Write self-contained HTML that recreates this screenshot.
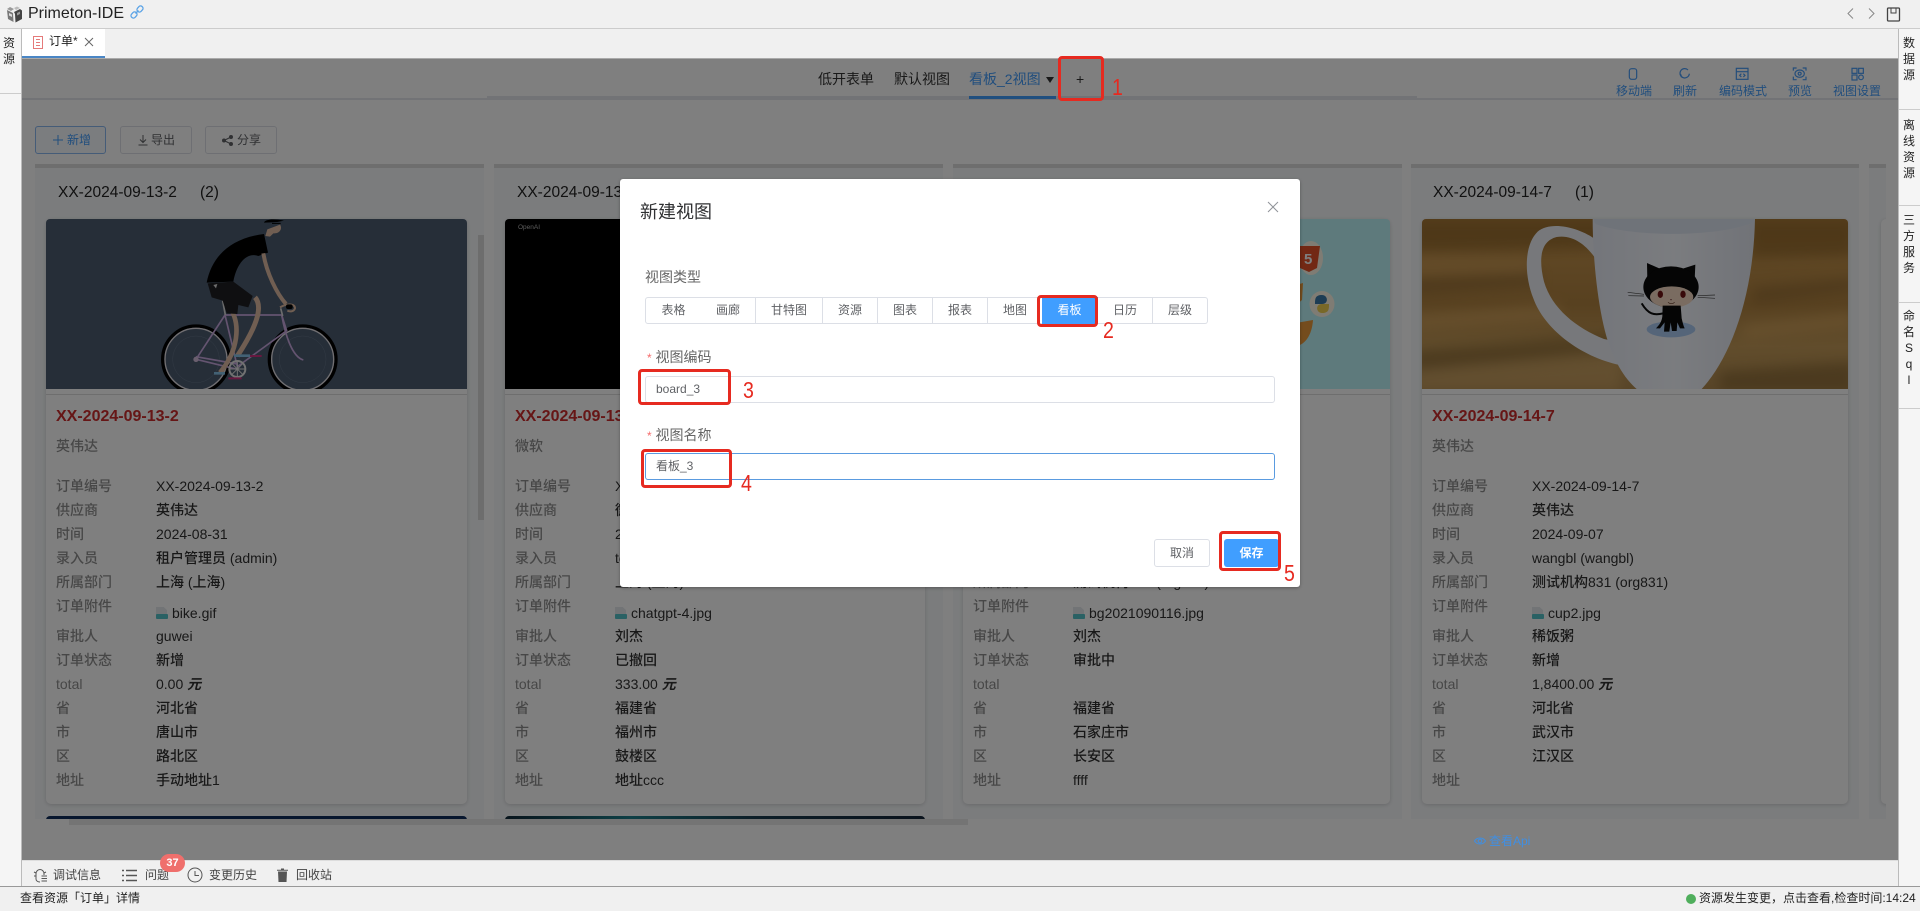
<!DOCTYPE html>
<html lang="zh"><head><meta charset="utf-8"><title>Primeton-IDE</title>
<style>
html,body{margin:0;padding:0;width:1920px;height:911px;overflow:hidden;background:#f0f0f0;font-family:"Liberation Sans","Noto Sans CJK SC",sans-serif;color:#303133}
.a{position:absolute;white-space:nowrap}
svg{position:absolute;overflow:visible}
.side{position:absolute;background:#f5f5f5}
.v{position:absolute;width:12px;font-size:12px;line-height:16px;word-break:break-all;white-space:normal;color:#222;text-align:center}
.t{top:70px;line-height:18px;font-size:14px;color:#333}
.b{top:126px;height:26px;border:1px solid #dcdfe6;border-radius:3px;background:#fff;font-size:12px;line-height:26px;color:#606266;box-sizing:content-box}
.tool{top:82px;line-height:18px;font-size:12px;color:#429cfb}
.col{position:absolute;top:164px;height:655px;width:449px;background:#f7f9fb;border-top:4px solid #dcdcdc;box-sizing:border-box}
.h{position:absolute;font-size:15.5px;line-height:20px;color:#222}
.card{position:absolute;top:219px;height:585px;background:#fff;border-radius:5px;box-shadow:0 1px 4px rgba(0,0,0,.16)}
.card .ln{position:absolute;left:0;right:0;top:175px;height:1px;background:#ddd}
.card .ti{position:absolute;left:10px;top:188px;font-size:16px;line-height:20px;font-weight:bold;color:#cc2c2c}
.card .su{position:absolute;left:10px;top:217px;font-size:14px;line-height:20px;color:#8e8e8e;font-weight:500}
.rows{position:absolute;left:10px;top:255px;right:0}
.rows p{margin:0;height:24px;line-height:24px;font-size:14px;position:relative;color:#8e8e8e;white-space:nowrap;font-weight:500}
.rows p.f{height:30px}
.rows i{position:absolute;left:100px;top:0;font-style:normal;color:#303030}
.rows p.f i{top:7px}
.rows i u{text-decoration:none;padding-left:16px;position:relative}
.rows i u:before{content:"";position:absolute;left:0;top:2px;width:11px;height:9px;background:#e4e8ec;clip-path:polygon(0 0,70% 0,100% 35%,100% 100%,0 100%)}
.rows i u:after{content:"";position:absolute;left:0;top:9px;width:12px;height:5px;background:#55c2c9;border-radius:1px}
.m{position:absolute;left:620px;top:179px;width:680px;height:408px;background:#fff;border-radius:3px;box-shadow:0 1px 3px rgba(0,0,0,.3);z-index:5}
.seg{position:absolute;top:297px;height:25px;border:1px solid #dcdfe6;border-left:0;font-size:12px;line-height:25px;text-align:center;color:#606266;background:#fff;z-index:6;box-sizing:content-box}
.lab{z-index:6;font-size:14px;line-height:20px;color:#666}
.inp{position:absolute;left:645px;width:628px;height:25px;border:1px solid #dcdfe6;border-radius:3px;background:#fff;z-index:6;font-size:12px;line-height:25px;color:#606266;text-indent:10px}
.red{position:absolute;border:3px solid #e62a20;border-radius:4px;box-sizing:border-box;z-index:8}
.n{position:absolute;z-index:8;color:#e62a20;font-size:23px;line-height:24px;transform:scaleX(.85);transform-origin:50% 50%}
.bt{position:absolute;left:0;font-size:12px;line-height:16px;color:#444;top:867px}
</style></head><body>

<!-- top bar -->
<div class="a" style="left:0;top:0;width:1920px;height:28px;background:#f0f0f0;border-bottom:1px solid #ccc"></div>
<svg style="left:6px;top:6px" width="17" height="17" viewBox="0 0 17 17"><path d="M8 6 L14 3 L16 4.5 L16 13 L9.5 16.5 L9 8 Z" fill="#444"/><path d="M1 4 L7 7 L7.5 16 L2 13 Z" fill="#777"/><path d="M1 3 L4 1 L8 3 L5 5 Z" fill="#999"/><path d="M8 2 L11 .5 L14 2 L10 4 Z" fill="#bbb"/><path d="M3 7 L6 8.5 L6 11 L3 9.5Z" fill="#ddd"/><path d="M11 7 L14 5.5 L14 8 L11 9.5Z" fill="#999"/></svg>
<div class="a" style="left:28px;top:4px;font-size:16px;line-height:20px;color:#222">Primeton-IDE</div>
<svg style="left:129px;top:4px" width="16" height="16" viewBox="0 0 16 16" fill="none" stroke="#5ba3e6" stroke-width="1.3"><rect x="-3.2" y="-2.4" width="6.4" height="4.8" rx="2.2" transform="translate(5,11) rotate(-48)"/><rect x="-3.2" y="-2.4" width="6.4" height="4.8" rx="2.2" transform="translate(11,5) rotate(-48)"/><path d="M6.5 9.5 L9.5 6.5"/></svg>
<svg style="left:1845px;top:7px" width="60" height="16" viewBox="0 0 60 16" fill="none" stroke="#666" stroke-width="1"><path d="M8 1.5 L3 6.5 L8 11.5" stroke="#888"/><path d="M24 1.5 L29 6.5 L24 11.5" stroke="#888"/><rect x="42.5" y="1" width="12" height="13" rx="1" stroke="#444" stroke-width="1.3"/><path d="M46 1 V6 H51 V1" stroke="#444"/></svg>

<!-- tab row -->
<div class="a" style="left:0;top:29px;width:1920px;height:29px;background:#f0f0f0"></div>
<div class="a" style="left:22px;top:29px;width:83px;height:27px;background:#fff;border-bottom:2px solid #4a86c5"></div>
<svg style="left:33px;top:36px" width="11" height="13" viewBox="0 0 11 13" fill="none" stroke="#e57a7a" stroke-width="1"><rect x=".5" y=".5" width="9" height="12"/><path d="M3 3.5H7M3 6.5H7M3 9.5H7"/></svg>
<div class="a" style="left:49px;top:32px;font-size:12px;line-height:18px;color:#222">订单*</div>
<svg style="left:84px;top:37px" width="10" height="10" viewBox="0 0 10 10" stroke="#666" fill="none" stroke-width="1"><path d="M1 1L9 9M9 1L1 9"/></svg>

<!-- sidebars -->
<div class="side" style="left:0;top:29px;width:21px;height:857px;border-right:1px solid #bbb"></div>
<div class="a" style="left:0;top:93px;width:21px;height:1px;background:#ccc"></div>
<div class="v" style="left:3px;top:35px">资源</div>
<div class="side" style="left:1898px;top:29px;width:22px;height:857px;border-left:1px solid #bbb"></div>
<div class="a" style="left:1899px;top:109px;width:21px;height:1px;background:#ccc"></div>
<div class="a" style="left:1899px;top:205px;width:21px;height:1px;background:#ccc"></div>
<div class="a" style="left:1899px;top:302px;width:21px;height:1px;background:#ccc"></div>
<div class="a" style="left:1899px;top:408px;width:21px;height:1px;background:#ccc"></div>
<div class="v" style="left:1903px;top:35px">数据源</div>
<div class="v" style="left:1903px;top:117px">离线资源</div>
<div class="v" style="left:1903px;top:212px">三方服务</div>
<div class="v" style="left:1903px;top:308px">命名<br>S<br>q<br>l</div>

<!-- main content -->
<div class="a" style="left:22px;top:58px;width:1876px;height:802px;background:#fff;overflow:hidden">
 <div style="position:absolute;left:-22px;top:-58px;width:1920px;height:911px">
  <div class="a" style="left:22px;top:98px;width:1876px;height:2px;background:#e4e7ed"></div>
  <div class="a" style="left:487px;top:96px;width:930px;height:3px;background:#e4e7ed"></div>
  <div class="a t" style="left:818px">低开表单</div>
  <div class="a t" style="left:894px">默认视图</div>
  <div class="a t" style="left:969px;color:#429cfb">看板_2视图</div>
  <div class="a" style="left:1046px;top:77px;width:0;height:0;border:4px solid transparent;border-top:6px solid #333;border-left-width:4.5px;border-right-width:4.5px"></div>
  <div class="a" style="left:969px;top:96px;width:87px;height:3px;background:#409eff"></div>
  <div class="a" style="left:1076px;top:69px;font-size:14px;line-height:20px;color:#333">+</div>

  <svg style="left:1610px;top:58px" width="280" height="46" viewBox="0 0 840 138" fill="none" stroke="#4a9cf6" stroke-width="3.600">
   <rect x="58" y="32" width="22" height="32" rx="7"/>
   <path d="M234 36A14 14 0 1 0 238 47M214 58A14 14 0 0 0 210 47" />
   <rect x="379" y="31" width="35" height="33"/><path d="M379 41H414M394 47L389 52L394 57M400 47L405 52L400 57"/>
   <path d="M550 38V30H560M578 30H588V38M550 56V65H560M578 65H588V56"/><ellipse cx="569" cy="47" rx="14" ry="11"/><circle cx="569" cy="47" r="4.500"/>
   <rect x="726" y="31" width="15" height="15"/><rect x="746" y="31" width="14" height="15"/><rect x="726" y="51" width="15" height="15"/><circle cx="753" cy="58" r="7"/>
  </svg>
  <div class="a tool" style="left:1616px">移动端</div>
  <div class="a tool" style="left:1673px">刷新</div>
  <div class="a tool" style="left:1719px">编码模式</div>
  <div class="a tool" style="left:1788px">预览</div>
  <div class="a tool" style="left:1833px">视图设置</div>

  <div class="a b" style="left:35px;width:69px;border-color:#8ab8f0;background:#f6faff;color:#429cfb"><svg style="left:17px;top:8px" width="10" height="10" viewBox="0 0 10 10" stroke="#429cfb"><path d="M5 0V10M0 5H10"/></svg><span class="a" style="left:31px">新增</span></div>
  <div class="a b" style="left:120px;width:70px"><svg style="left:17px;top:7px" width="10" height="12" viewBox="0 0 10 12" fill="none" stroke="#606266"><path d="M5 1V8M2 5.500L5 8.500L8 5.500M.5 11H9.500"/></svg><span class="a" style="left:30px">导出</span></div>
  <div class="a b" style="left:205px;width:70px"><svg style="left:16px;top:8px" width="11" height="11" viewBox="0 0 11 11" fill="#606266" stroke="#606266"><circle cx="2" cy="5.500" r="1.500"/><circle cx="9" cy="2" r="1.500"/><circle cx="9" cy="9" r="1.500"/><path d="M2 5.500L9 2M2 5.500L9 9"/></svg><span class="a" style="left:31px">分享</span></div>

  <!-- board -->
  <div class="a" style="left:35px;top:0;width:1851px;height:819px;overflow:hidden">
   <div style="position:absolute;left:-35px;top:0;width:1920px;height:819px">
    <div class="col" style="left:35px"></div>
    <div class="col" style="left:494px"></div>
    <div class="col" style="left:953px"></div>
    <div class="col" style="left:1411px;width:448px"></div>
    <div class="col" style="left:1869px"></div>
    <div class="a" style="left:478px;top:235px;width:6px;height:285px;background:#dadada"></div>

    <div class="h" style="left:58px;top:183px">XX-2024-09-13-2</div><div class="h" style="left:200px;top:183px">(2)</div>
    <div class="h" style="left:517px;top:183px">XX-2024-09-13-5</div>
    <div class="h" style="left:1433px;top:183px">XX-2024-09-14-7</div><div class="h" style="left:1575px;top:183px">(1)</div>

    <!-- card 1 -->
    <div class="card" style="left:46px;width:421px"><div class="ln"></div><div class="ti">XX-2024-09-13-2</div><div class="su">英伟达</div>
     <div class="rows"><p>订单编号<i>XX-2024-09-13-2</i></p><p>供应商<i>英伟达</i></p><p>时间<i>2024-08-31</i></p><p>录入员<i>租户管理员 (admin)</i></p><p>所属部门<i>上海 (上海)</i></p><p class="f">订单附件<i><u>bike.gif</u></i></p><p>审批人<i>guwei</i></p><p>订单状态<i>新增</i></p><p>total<i>0.00 <b><em>元</em></b></i></p><p>省<i>河北省</i></p><p>市<i>唐山市</i></p><p>区<i>路北区</i></p><p>地址<i>手动地址1</i></p></div></div>
    <!-- card 2 -->
    <div class="card" style="left:505px;width:420px"><div class="ln"></div><div class="ti">XX-2024-09-13-5</div><div class="su">微软</div>
     <div class="rows"><p>订单编号<i>XX-2024-09-13-5</i></p><p>供应商<i>微软</i></p><p>时间<i>2024-09-13</i></p><p>录入员<i>tenant (tenant)</i></p><p>所属部门<i>上海 (上海)</i></p><p class="f">订单附件<i><u>chatgpt-4.jpg</u></i></p><p>审批人<i>刘杰</i></p><p>订单状态<i>已撤回</i></p><p>total<i>333.00 <b><em>元</em></b></i></p><p>省<i>福建省</i></p><p>市<i>福州市</i></p><p>区<i>鼓楼区</i></p><p>地址<i>地址ccc</i></p></div></div>
    <!-- card 3 -->
    <div class="card" style="left:963px;width:427px"><div class="ln"></div><div class="ti">XX-2024-09-14-3</div><div class="su">英伟达</div>
     <div class="rows"><p>订单编号<i>XX-2024-09-14-3</i></p><p>供应商<i>英伟达</i></p><p>时间<i>2024-09-07</i></p><p>录入员<i>wangbl (wangbl)</i></p><p>所属部门<i>测试机构831 (org831)</i></p><p class="f">订单附件<i><u>bg2021090116.jpg</u></i></p><p>审批人<i>刘杰</i></p><p>订单状态<i>审批中</i></p><p>total<i></i></p><p>省<i>福建省</i></p><p>市<i>石家庄市</i></p><p>区<i>长安区</i></p><p>地址<i>ffff</i></p></div></div>
    <!-- card 4 -->
    <div class="card" style="left:1422px;width:426px"><div class="ln"></div><div class="ti">XX-2024-09-14-7</div><div class="su">英伟达</div>
     <div class="rows"><p>订单编号<i>XX-2024-09-14-7</i></p><p>供应商<i>英伟达</i></p><p>时间<i>2024-09-07</i></p><p>录入员<i>wangbl (wangbl)</i></p><p>所属部门<i>测试机构831 (org831)</i></p><p class="f">订单附件<i><u>cup2.jpg</u></i></p><p>审批人<i>稀饭粥</i></p><p>订单状态<i>新增</i></p><p>total<i>1,8400.00 <b><em>元</em></b></i></p><p>省<i>河北省</i></p><p>市<i>武汉市</i></p><p>区<i>江汉区</i></p><p>地址<i></i></p></div></div>
    <div class="card" style="left:1881px;width:426px"></div>

    <div class="a" style="left:46px;top:816px;width:421px;height:6px;background:#0f2c5c;border-radius:4px 4px 0 0"></div>
    <div class="a" style="left:505px;top:816px;width:420px;height:6px;background:linear-gradient(90deg,#112a3a,#1c7f8c 30%,#1a3c50 60%,#15263a);border-radius:4px 4px 0 0"></div>

    <!-- images -->
    <svg style="left:0;top:0" width="1920" height="819" viewBox="0 0 1920 819">
     <defs>
      <clipPath id="c1"><path d="M46 389V223a4 4 0 0 1 4-4H463a4 4 0 0 1 4 4V389Z"/></clipPath>
      <clipPath id="c2"><path d="M505 389V223a4 4 0 0 1 4-4H921a4 4 0 0 1 4 4V389Z"/></clipPath>
      <clipPath id="c3"><path d="M963 389V219H1386a4 4 0 0 1 4 4V389Z"/></clipPath>
      <clipPath id="c4"><path d="M1422 389V223a4 4 0 0 1 4-4H1844a4 4 0 0 1 4 4V389Z"/></clipPath>
      <linearGradient id="w" x1="0" y1="0" x2="0" y2="1"><stop offset="0" stop-color="#ae7e3a"/><stop offset=".25" stop-color="#bd8d48"/><stop offset=".5" stop-color="#b08240"/><stop offset=".75" stop-color="#c39a58"/><stop offset="1" stop-color="#b08a50"/></linearGradient>
      <linearGradient id="cup" x1="0" y1="0" x2="1" y2="0"><stop offset="0" stop-color="#e8ecf6"/><stop offset=".5" stop-color="#f6f9ff"/><stop offset="1" stop-color="#e2e6f0"/></linearGradient>
      <filter id="bl" x="-20%" y="-50%" width="140%" height="200%"><feGaussianBlur stdDeviation="18"/></filter>
     </defs>
     <g clip-path="url(#c1)"><rect x="46" y="219" width="421" height="170" fill="#4c5c70"/>
      <svg x="40" y="210" width="440" height="190" viewBox="0 0 1320 570" fill="none">
       <circle cx="468" cy="448" r="100" stroke="#000" stroke-width="10"/><circle cx="468" cy="448" r="93" stroke="#e2dfe4" stroke-width="4"/><circle cx="468" cy="448" r="70" stroke="#65758a" stroke-width="1.500"/>
       <circle cx="788" cy="448" r="100" stroke="#000" stroke-width="10"/><circle cx="788" cy="448" r="93" stroke="#e2dfe4" stroke-width="4"/><circle cx="788" cy="448" r="70" stroke="#65758a" stroke-width="1.500"/>
       <path d="M468 448L555 315H725L740 362L592 470L555 315M468 448L592 478M468 440L592 462" stroke="#c8a8e0" stroke-width="5"/>
       <path d="M725 315C735 370 755 440 790 450" stroke="#c8a8e0" stroke-width="5"/>
       <path d="M548 272L556 315M722 295L728 318" stroke="#d8d8d8" stroke-width="5"/>
       <path d="M720 292C740 280 765 280 765 295C762 305 750 306 742 302" stroke="#e0bda4" stroke-width="6"/>
       <rect x="738" y="283" width="20" height="14" rx="6" fill="#000"/>
       <circle cx="468" cy="448" r="8" fill="#d4bedc"/>
       <path d="M574 300C600 345 596 420 540 488" stroke="#e0bda4" stroke-width="14"/>
       <path d="M645 262C670 290 650 350 592 438" stroke="#e0bda4" stroke-width="15"/>
       <path d="M582 437H630M522 490H555" stroke="#86c2e8" stroke-width="8"/>
       <circle cx="592" cy="477" r="24" stroke="#e4e4e4" stroke-width="6"/><path d="M592 453V501M568 477H616M575 460L609 494M609 460L575 494" stroke="#e4e4e4" stroke-width="3"/>
       <path d="M630 438H665M565 505H605" stroke="#d03080" stroke-width="6"/>
       <path d="M500 218C515 140 570 85 672 72L684 128L655 138C620 125 590 160 580 215Z" fill="#000"/>
       <path d="M503 220L580 215L638 258L625 292L595 285L592 312L560 310L548 272L515 262Z" fill="#1e1e22"/>
       <path d="M520 225L532 222L528 235Z" fill="#ddd"/>
       <path d="M670 130C680 190 710 250 738 282" stroke="#e0bda4" stroke-width="12"/>
       <path d="M676 78L682 58L720 44C728 55 720 72 700 70L690 80Z" fill="#e0bda4"/>
       <path d="M672 38C675 28 700 26 732 32L712 36C700 36 685 38 672 38Z" fill="#000"/>
       <path d="M696 40H722" stroke="#000" stroke-width="3"/>
      </svg>
     </g>
     <g clip-path="url(#c2)"><rect x="505" y="219" width="420" height="170" fill="#000"/>
      <text x="518" y="229" font-size="6.500" fill="#bbb" font-family="Liberation Sans">OpenAI</text>
      <text x="620" y="229" font-size="5" fill="#999" font-family="Liberation Sans">Research  Product</text>
     </g>
     <g clip-path="url(#c3)"><rect x="963" y="219" width="427" height="170" fill="#bcf4f8"/>
      <ellipse cx="1311" cy="258" rx="12" ry="17" fill="#fff8e8"/>
      <path d="M1300 246H1320L1317 268L1309 272L1300 268Z" fill="#e45028"/>
      <text x="1304" y="264" font-size="15" font-weight="bold" fill="#fff" font-family="Liberation Sans">5</text>
      <ellipse cx="1322" cy="304" rx="12.500" ry="13" fill="#fff8e8"/>
      <path d="M1322 295C1315 295 1315 299 1315 304H1322C1329 304 1328 295 1322 295Z" fill="#3a78a8"/><path d="M1322 313C1329 313 1329 309 1329 304H1322C1315 304 1316 313 1322 313Z" fill="#f0d050"/>
      <path d="M1296 285L1303 283L1302 300L1296 305Z" fill="#e8983a"/><path d="M1296 323L1313 320C1312 335 1305 345 1296 346Z" fill="#e8983a"/>
     </g>
     <g clip-path="url(#c4)"><rect x="1422" y="219" width="426" height="170" fill="url(#w)"/>
      <svg x="1400" y="215" width="460" height="180" viewBox="0 0 1380 540">
       <g filter="url(#bl)" opacity=".55">
        <path d="M40 20H640V95L40 110ZM1050 20H1360V120L1050 130Z" fill="#8a6228"/>
        <path d="M40 190L420 170V215L40 240ZM1060 220L1360 190V230L1060 265Z" fill="#8e6830"/>
        <path d="M40 300L480 265V320L40 345ZM1030 330L1360 290V340L1030 370Z" fill="#dcab64"/>
        <path d="M40 130H390V170L40 175Z" fill="#d4a25c"/>
        <path d="M40 405L640 355V410L40 470ZM960 470L1360 440V530L960 530Z" fill="#80602e"/>
        <path d="M40 470L660 430V530H40Z" fill="#d4aa6a"/>
       </g>
       <path d="M582 70C530 35 450 18 413 50C372 90 372 180 400 250C432 340 540 425 660 450L640 378L612 372C530 340 455 280 432 200C415 130 422 78 470 66C520 58 560 92 586 130Z" fill="#eff1f6"/>
       <path d="M578 12C578 150 600 340 640 420C660 470 690 505 710 522H905C990 430 1060 250 1065 12Z" fill="url(#cup)"/>
       <path d="M582 12C582 20 584 26 590 28C700 66 950 68 1060 22L1064 12Z" fill="#dfe6f2"/>
       <ellipse cx="813" cy="343" rx="73" ry="24" fill="#aacbf2"/>
       <path d="M742 195L741 144L782 162C802 157 826 157 845 162L886 149L884 195Z" fill="#0a0a0a"/>
       <ellipse cx="813" cy="216" rx="83" ry="62" fill="#0a0a0a"/>
       <ellipse cx="815" cy="246" rx="65" ry="32" fill="#f4d8c2"/>
       <ellipse cx="781" cy="238" rx="8" ry="11" fill="#701414"/><ellipse cx="849" cy="238" rx="8" ry="11" fill="#701414"/>
       <circle cx="813" cy="254" r="2" fill="#6a3030"/><path d="M804 262C810 267 818 267 824 262" fill="none" stroke="#5a3020" stroke-width="2"/>
       <path d="M788 272H842L845 310C848 322 850 332 854 340L840 340L832 322L830 348L816 348L812 322L808 350L792 350L794 322L780 340L768 340C778 330 785 320 787 305Z" fill="#0a0a0a"/>
       <path d="M725 265C745 298 762 302 790 295" fill="none" stroke="#0a0a0a" stroke-width="6"/>
       <path d="M683 232L732 238M685 242L732 243M893 242L945 240M893 247L945 250" stroke="#444" stroke-width="2" fill="none"/>
      </svg>
     </g>
    </svg>
   </div>
  </div>
  <div class="a" style="left:69px;top:819px;width:899px;height:6px;background:#e8e8e8"></div>
 </div>
</div>
<div class="a" style="left:22px;top:58px;width:1876px;height:802px;background:rgba(0,0,0,.5);border-top:1px solid #aaa;box-sizing:border-box"></div>

<svg style="left:1474px;top:836px" width="12" height="10" viewBox="0 0 12 10" fill="none" stroke="#3f8fe4"><path d="M.5 5C3 1 9 1 11.500 5C9 9 3 9 .5 5Z"/><circle cx="6" cy="5" r="1.800"/></svg>
<div class="a" style="left:1489px;top:832px;font-size:12px;line-height:18px;color:#3f8fe4">查看Api</div>

<!-- bottom panel -->
<div class="a" style="left:22px;top:860px;width:1876px;height:26px;background:#f0f0f0;border-top:1px solid #ddd;box-sizing:border-box"></div>
<svg style="left:33px;top:868px" width="15" height="15" viewBox="0 0 15 15" fill="none" stroke="#555"><path d="M3 6C3 3 5 1.500 7 1.500C9 1.500 11 3 11 6V7M3 6V11C3 13 5 14 7 14M1 8H3M1 4L3 5M11 5L13 4"/><path d="M8.500 8H14M8.500 10.500H14M8.500 13H14"/></svg>
<div class="bt" style="left:53px">调试信息</div>
<svg style="left:122px;top:869px" width="15" height="13" viewBox="0 0 15 13" stroke="#555" stroke-width="1.500"><path d="M0 1.500H2M4 1.500H15M0 6.500H2M4 6.500H15M0 11.500H2M4 11.500H15"/></svg>
<div class="bt" style="left:145px">问题</div>
<svg style="left:187px;top:867px" width="16" height="16" viewBox="0 0 16 16" fill="none" stroke="#555"><circle cx="8" cy="8" r="7"/><path d="M8 4V8.500H12"/></svg>
<div class="bt" style="left:209px">变更历史</div>
<svg style="left:277px;top:868px" width="11" height="14" viewBox="0 0 11 14" fill="#555"><path d="M1 3.500H10L9.500 14H1.500Z"/><path d="M0 1.800H4V.5H7V1.800H11V2.800H0Z"/></svg>
<div class="bt" style="left:296px">回收站</div>
<div class="a" style="left:160px;top:854px;width:25px;height:18px;border-radius:9px;background:#ef6f6c;color:#fff;font-size:11px;font-weight:bold;line-height:18px;text-align:center;z-index:3">37</div>

<!-- status bar -->
<div class="a" style="left:0;top:886px;width:1920px;height:25px;background:#f0f0f0;border-top:1px solid #999;box-sizing:border-box"></div>
<div class="a" style="left:20px;top:889px;font-size:12px;line-height:18px;color:#222">查看资源「订单」详情</div>
<div class="a" style="left:1686px;top:894px;width:10px;height:10px;border-radius:50%;background:#4fae5c"></div>
<div class="a" style="left:1699px;top:889px;font-size:12px;line-height:18px;color:#222">资源发生变更，点击查看,检查时间:14:24</div>

<!-- modal -->
<div class="m"></div>
<div class="a" style="left:640px;top:200px;font-size:18px;line-height:24px;color:#303133;z-index:6">新建视图</div>
<svg style="left:1267px;top:201px;z-index:6" width="12" height="12" viewBox="0 0 12 12" stroke="#909399" fill="none"><path d="M1 1L11 11M11 1L1 11"/></svg>
<div class="a lab" style="left:645px;top:267px">视图类型</div>

<div class="seg" style="left:645px;width:55px;border-left:1px solid #dcdfe6;border-radius:3px 0 0 3px">表格</div>
<div class="seg" style="left:701px;width:54px">画廊</div>
<div class="seg" style="left:756px;width:66px">甘特图</div>
<div class="seg" style="left:823px;width:54px">资源</div>
<div class="seg" style="left:878px;width:54px">图表</div>
<div class="seg" style="left:933px;width:54px">报表</div>
<div class="seg" style="left:988px;width:54px">地图</div>
<div class="seg" style="left:1042px;width:55px;background:#409eff;color:#fff;border-color:#409eff">看板</div>
<div class="seg" style="left:1098px;width:54px">日历</div>
<div class="seg" style="left:1153px;width:54px;border-radius:0 3px 3px 0">层级</div>

<div class="a lab" style="left:647px;top:347px"><span style="color:#f56c6c;font-size:12px">*</span> 视图编码</div>
<div class="inp" style="top:376px">board_3</div>
<div class="a lab" style="left:647px;top:425px"><span style="color:#f56c6c;font-size:12px">*</span> 视图名称</div>
<div class="inp" style="top:453px;border-color:#5a9be0">看板_3</div>

<div class="a" style="left:1154px;top:539px;width:54px;height:26px;border:1px solid #dcdfe6;border-radius:3px;background:#fff;text-align:center;font-size:12px;line-height:26px;color:#606266;z-index:6">取消</div>
<div class="a" style="left:1224px;top:539px;width:55px;height:28px;border-radius:3px;background:#409eff;text-align:center;font-size:12px;font-weight:bold;line-height:28px;color:#fff;z-index:6">保存</div>

<!-- annotations -->
<div class="red" style="left:1058px;top:56px;width:46px;height:45px"></div>
<div class="n" style="left:1111px;top:75px">1</div>
<div class="red" style="left:1037px;top:295px;width:61px;height:32px"></div>
<div class="n" style="left:1102px;top:318px">2</div>
<div class="red" style="left:638px;top:369px;width:93px;height:36px"></div>
<div class="n" style="left:742px;top:378px">3</div>
<div class="red" style="left:641px;top:449px;width:91px;height:39px"></div>
<div class="n" style="left:740px;top:471px">4</div>
<div class="red" style="left:1219px;top:531px;width:62px;height:40px"></div>
<div class="n" style="left:1283px;top:561px">5</div>
</body></html>
